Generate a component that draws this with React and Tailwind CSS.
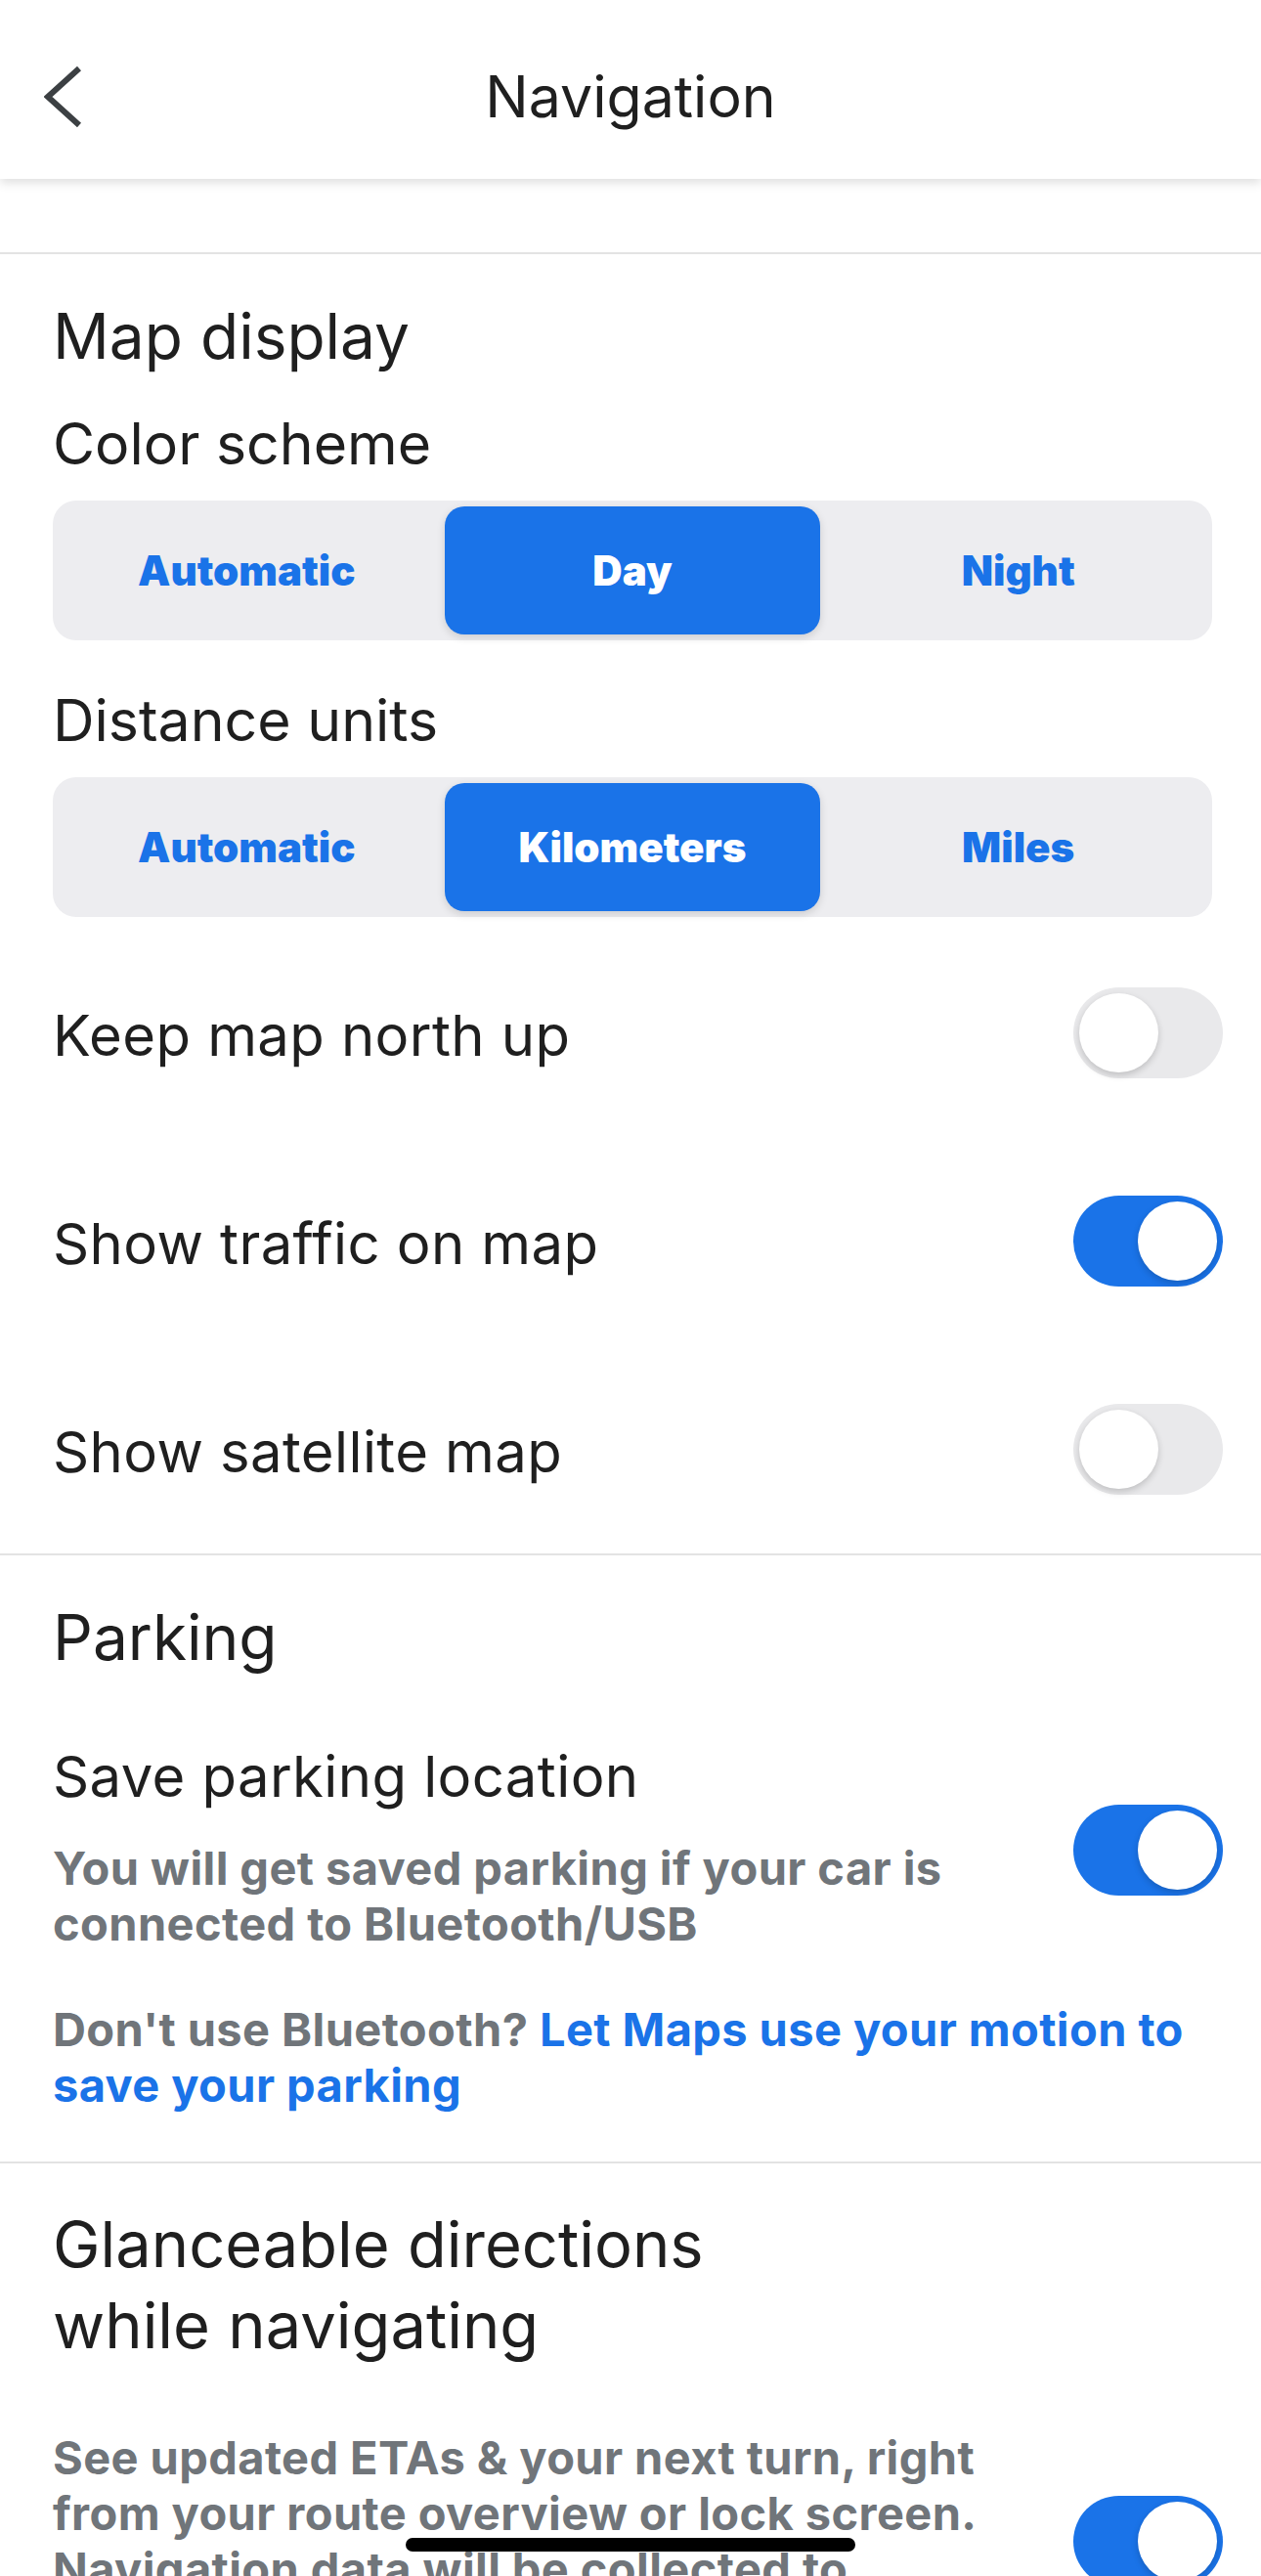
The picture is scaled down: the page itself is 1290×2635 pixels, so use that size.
import React from 'react';

const Toggle = ({ on }) => (
  <div
    className={
      on
        ? 'flex h-[93px] w-[153px] shrink-0 items-center justify-end rounded-full bg-[#1a73e8] px-[6px]'
        : 'flex h-[93px] w-[153px] shrink-0 items-center justify-start rounded-full bg-[#e9e9eb] px-[6px]'
    }
  >
    <div className="h-[81px] w-[81px] rounded-full bg-white shadow-[0_3px_7px_rgba(0,0,0,0.18)]" />
  </div>
);

const Segmented = ({ options, selected }) => (
  <div className="ml-[54px] mr-[50px] flex h-[143px] rounded-[24px] bg-[#ededf0] px-px py-[6px]">
    {options.map((opt) => (
      <div key={opt} className="flex-1 px-[5px]">
        <div
          className={
            opt === selected
              ? 'flex h-full items-center justify-center rounded-[20px] bg-[#1a73e8] text-[42px] font-black text-white shadow-[0_3px_8px_rgba(0,0,0,0.14)]'
              : 'flex h-full items-center justify-center rounded-[20px] text-[42px] font-black text-[#1a73e8]'
          }
        >
          {opt}
        </div>
      </div>
    ))}
  </div>
);

const SwitchRow = ({ label, on }) => (
  <div className="flex h-[213px] items-center justify-between pl-[54px] pr-[39px]">
    <span className="pt-[6px] text-[58px] leading-[57px] tracking-[0.4px]">{label}</span>
    <Toggle on={on} />
  </div>
);

const App = () => {
  return (
    <div className="relative h-[2635px] overflow-hidden bg-white font-['Inter','Noto_Sans',sans-serif] text-[#1f1f1f]">
      <header className="relative z-10 flex h-[183px] items-center bg-white pt-[15px] shadow-[0_4px_10px_rgba(0,0,0,0.13)]">
        <div className="flex w-[130px] pl-[45px]">
          <svg width="40" height="64" viewBox="0 0 40 64" fill="none">
            <polyline points="36,3 4,32 36,61" stroke="#3c4043" strokeWidth="6" strokeLinejoin="miter" />
          </svg>
        </div>
        <h1 className="flex-1 text-center text-[59px] leading-[58px]">Navigation</h1>
        <div className="w-[130px]" />
      </header>

      <div className="h-[77px] border-b-2 border-[#e3e3e3]" />

      <section className="border-b-2 border-[#e3e3e3]">
        <h2 className="mt-[52px] pl-[54px] text-[64px] leading-[64px]">Map display</h2>
        <h3 className="mt-[49px] pl-[54px] text-[59px] leading-[58px]">Color scheme</h3>
        <div className="mt-[29px]">
          <Segmented options={['Automatic', 'Day', 'Night']} selected="Day" />
        </div>
        <h3 className="mt-[53px] pl-[54px] text-[59px] leading-[58px]">Distance units</h3>
        <div className="mt-[29px]">
          <Segmented options={['Automatic', 'Kilometers', 'Miles']} selected="Kilometers" />
        </div>
        <div className="mt-[12px]">
          <SwitchRow label="Keep map north up" on={false} />
          <SwitchRow label="Show traffic on map" on />
          <SwitchRow label="Show satellite map" on={false} />
        </div>
      </section>

      <section className="border-b-2 border-[#e3e3e3] pb-[50px]">
        <h2 className="mt-[52px] pl-[54px] text-[64px] leading-[64px]">Parking</h2>
        <div className="mt-[82px] flex items-center pl-[54px] pr-[39px]">
          <div className="flex-1">
            <div className="text-[58px] leading-[57px] tracking-[0.4px]">Save parking location</div>
            <p className="mt-[36px] text-[47px] font-bold leading-[57px] tracking-[0.4px] text-[#70757a]">
              You will get saved parking if your car is
              <br />
              connected to Bluetooth/USB
            </p>
          </div>
          <Toggle on />
        </div>
        <p className="mt-[51px] px-[54px] text-[47px] font-bold leading-[57px] tracking-[0.4px] text-[#70757a]">
          Don't use Bluetooth?{' '}
          <span className="text-[#1a73e8]">
            Let Maps use your motion to
            <br />
            save your parking
          </span>
        </p>
      </section>

      <section>
        <h2 className="mt-[41px] pl-[54px] text-[65px] leading-[83px]">
          Glanceable directions
          <br />
          while navigating
        </h2>
        <div className="mt-[65px] flex items-center pl-[54px] pr-[39px]">
          <p className="flex-1 text-[47px] font-bold leading-[57px] tracking-[0.4px] text-[#70757a]">
            See updated ETAs &amp; your next turn, right
            <br />
            from your route overview or lock screen.
            <br />
            Navigation data will be collected to
            <br />
            improve your experience.
          </p>
          <Toggle on />
        </div>
      </section>

      <div className="absolute bottom-[25px] left-1/2 h-[14px] w-[460px] -translate-x-1/2 rounded-full bg-black" />
    </div>
  );
};

export default App;
